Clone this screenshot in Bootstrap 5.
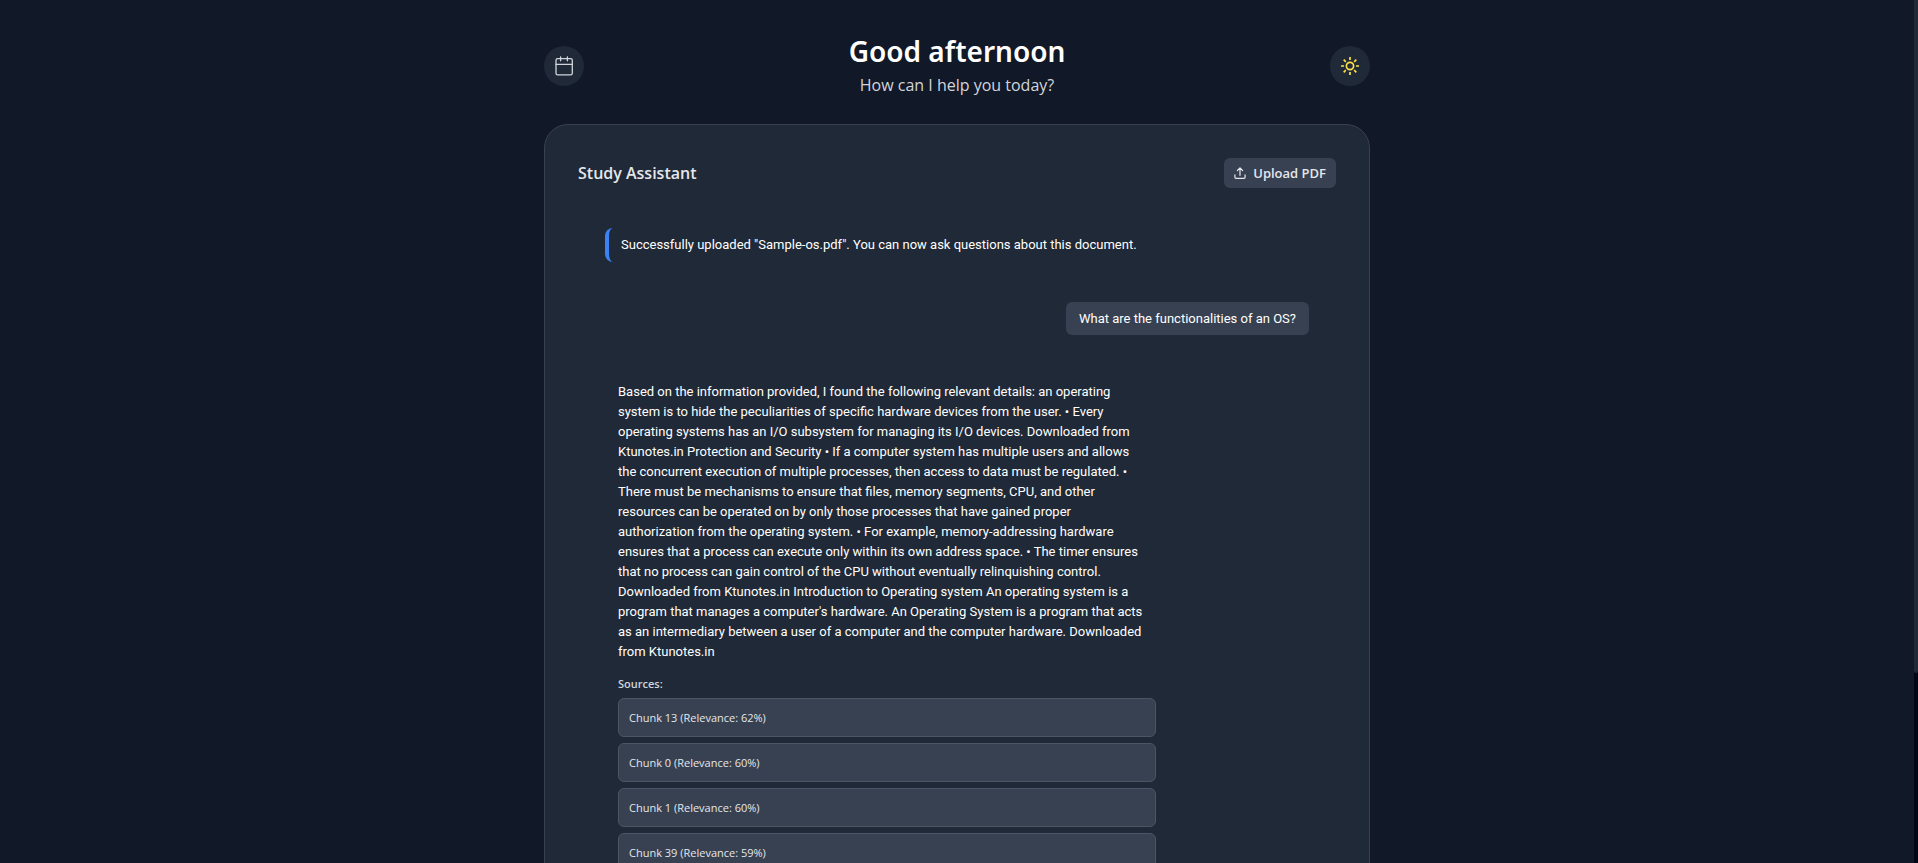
<!DOCTYPE html>
<html lang="en">
<head>
<meta charset="utf-8">
<meta name="viewport" content="width=device-width, initial-scale=1">
<title>Study Assistant</title>
<link href="https://cdn.jsdelivr.net/npm/bootstrap@5.3.0/dist/css/bootstrap.min.css" rel="stylesheet">
<style>
  body { background: #111827; color: #fff; font-family: "Open Sans", "Noto Sans", sans-serif; }
  .page-scroll { scrollbar-width: none; }
  .page-scroll::-webkit-scrollbar { display: none; }
  .rail { width: 4px; background: #020617; }
  .rail-thumb { height: 78%; background: #1f2937; border-radius: 0 0 2px 2px; }
  .shell { max-width: 826px; }
  .greeting { font-family: "Noto Sans", sans-serif; font-size: 28px; line-height: 39px; font-weight: 600; }
  .greeting-sub { font-size: 16px; line-height: 29px; color: #d1d5db; }
  .round-btn { width: 40px; height: 40px; background: #1f2937; color: #d1d5db; }
  .round-btn.sun { color: #fde047; }
  .panel { background: #1f2937; border: 1px solid #374151; border-radius: 24px; padding: 33px; }
  .panel-title { font-size: 16px; line-height: 30px; font-weight: 600; color: #e5e7eb; }
  .upload { height: 30px; padding: 0 10px; gap: 7px; background: #374151; color: #e5e7eb; font-size: 13px; line-height: 20px; font-weight: 600; border-radius: 6px; }
  .chat { padding: 40px 27px 0 27px; font-family: Roboto, sans-serif; font-size: 13px; line-height: 20px; }
  .notice { border-left: 4px solid #3b82f6; border-radius: 8px; padding: 7px 12px; }
  .question { background: #374151; border-radius: 6px; padding: 6px 13px; margin-top: 40px; line-height: 21px; }
  .answer { width: 538px; max-width: 100%; margin: 47px 0 0 13px; }
  .answer-sources { font-family: "Open Sans", sans-serif; font-size: 11px; }
  .sources-label { line-height: 16px; font-weight: 600; color: #d1d5db; margin-top: 14px; margin-bottom: 6px; }
  .source-list { gap: 6px; }
  .source { background: #374151; border: 1px solid #4b5563; border-radius: 6px; color: #e5e7eb; line-height: 17px; padding: 10px; }
</style>
</head>
<body class="vh-100 d-flex overflow-hidden">
<main class="page-scroll flex-grow-1 overflow-auto">
  <div class="shell mx-auto pb-5">
    <header class="d-flex align-items-center justify-content-between">
      <button type="button" class="round-btn btn rounded-circle border-0 p-0 d-flex align-items-center justify-content-center mt-2" aria-label="Calendar">
        <svg width="20" height="20" viewBox="0 0 20 20" fill="none" stroke="currentColor" stroke-width="1.3" stroke-linecap="round" stroke-linejoin="round"><rect x="2" y="2.6" width="16.3" height="16.2" rx="1.6"/><path d="M2 8.3h16.3M6.6 1v3.8M13.4 1v3.8"/></svg>
      </button>
      <div class="text-center pt-4">
        <h1 class="greeting mb-0 mt-2">Good afternoon</h1>
        <p class="greeting-sub mb-0 pb-4">How can I help you today?</p>
      </div>
      <button type="button" class="round-btn sun btn rounded-circle border-0 p-0 d-flex align-items-center justify-content-center mt-2" aria-label="Light theme">
        <svg width="20" height="20" viewBox="0 0 20 20" fill="none" stroke="currentColor" stroke-width="1.7"><circle cx="10" cy="10" r="3.6"/><path d="M10 1v3M10 16v3M1 10h3M16 10h3M3.7 3.7l2.1 2.1M14.2 14.2l2.1 2.1M16.3 3.7l-2.1 2.1M5.8 14.2l-2.1 2.1"/></svg>
      </button>
    </header>
    <section class="panel">
      <div class="d-flex align-items-center justify-content-between">
        <h2 class="panel-title mb-0">Study Assistant</h2>
        <button type="button" class="upload btn border-0 d-flex align-items-center">
          <svg width="12" height="12" viewBox="0 0 13 13" fill="none" stroke="currentColor" stroke-width="1.3" stroke-linecap="round" stroke-linejoin="round"><path d="M6.5 9V1.2M3.7 3.8l2.8-2.8 2.8 2.8M1 8.5v2.7c0 .7.4 1.1 1.1 1.1h8.8c.7 0 1.1-.4 1.1-1.1V8.5"/></svg>Upload PDF
        </button>
      </div>
      <div class="chat d-flex flex-column">
        <div class="notice align-self-start">Successfully uploaded "Sample-os.pdf". You can now ask questions about this document.</div>
        <div class="question align-self-end">What are the functionalities of an OS?</div>
        <div class="answer">
          <p class="text-nowrap mb-0">Based on the information provided, I found the following relevant details: an operating<br>
          system is to hide the peculiarities of specific hardware devices from the user. • Every<br>
          operating systems has an I/O subsystem for managing its I/O devices. Downloaded from<br>
          Ktunotes.in Protection and Security • If a computer system has multiple users and allows<br>
          the concurrent execution of multiple processes, then access to data must be regulated. •<br>
          There must be mechanisms to ensure that files, memory segments, CPU, and other<br>
          resources can be operated on by only those processes that have gained proper<br>
          authorization from the operating system. • For example, memory-addressing hardware<br>
          ensures that a process can execute only within its own address space. • The timer ensures<br>
          that no process can gain control of the CPU without eventually relinquishing control.<br>
          Downloaded from Ktunotes.in Introduction to Operating system An operating system is a<br>
          program that manages a computer's hardware. An Operating System is a program that acts<br>
          as an intermediary between a user of a computer and the computer hardware. Downloaded<br>
          from Ktunotes.in</p>
          <div class="answer-sources">
            <div class="sources-label">Sources:</div>
            <div class="source-list d-grid">
              <div class="source">Chunk 13 (Relevance: 62%)</div>
              <div class="source">Chunk 0 (Relevance: 60%)</div>
              <div class="source">Chunk 1 (Relevance: 60%)</div>
              <div class="source">Chunk 39 (Relevance: 59%)</div>
            </div>
          </div>
        </div>
      </div>
    </section>
  </div>
</main>
<div class="rail flex-shrink-0" aria-hidden="true"><div class="rail-thumb"></div></div>
<script src="https://cdn.jsdelivr.net/npm/bootstrap@5.3.0/dist/js/bootstrap.bundle.min.js"></script>
</body>
</html>
